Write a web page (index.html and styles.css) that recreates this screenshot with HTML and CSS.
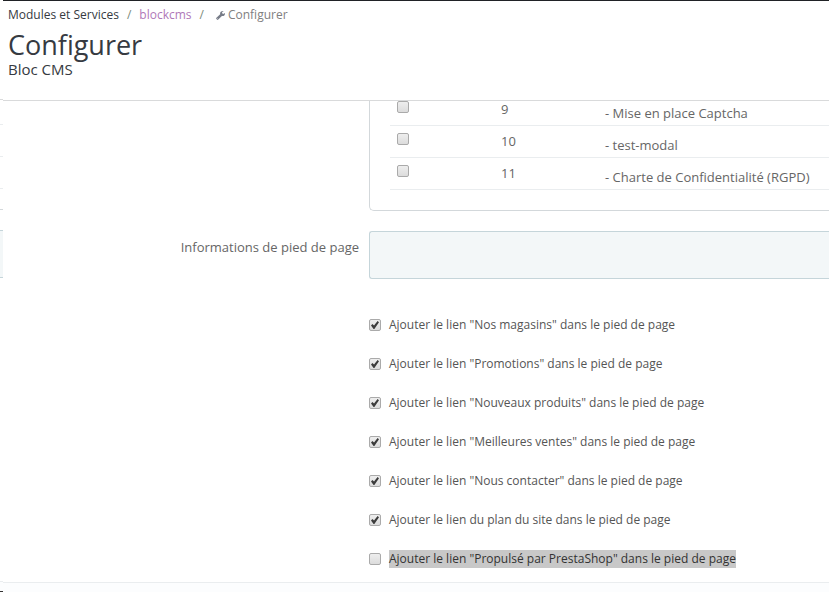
FILE: index.html
```html
<!DOCTYPE html>
<html lang="fr">
<head>
    <meta charset="UTF-8">
    <meta name="viewport" content="width=device-width, initial-scale=1.0">
    <title>Configurer - Bloc CMS</title>
    <link rel="stylesheet" href="styles.css">
</head>
<body>
    <!-- Left edge -->
    <div class="edge">
        <div class="edge-head"></div>
        <div class="edge-row"></div>
        <div class="edge-row"></div>
        <div class="edge-row"></div>
        <div class="edge-end"></div>
        <div class="edge-well"></div>
        <div class="edge-form"></div>
        <div class="edge-footer"></div>
    </div>

    <div class="page">
        <!-- Page header -->
        <header class="page-head">
            <nav class="breadcrumb">
                <span class="crumb crumb-main">Modules et Services</span>
                <span class="sep">/</span>
                <a class="crumb crumb-link" href="#">blockcms</a>
                <span class="sep">/</span>
                <span class="crumb crumb-current">
                    <svg class="icon-wrench" viewBox="0 0 16 16" aria-hidden="true">
                        <path fill-rule="evenodd" d="M15.6 3.6 12.9 5.2 10.9 4.100V1.900L13.600.400C11.200-.500 8.100.800 7.400 3.400c-.2.800-.2 1.500 0 2.200L.8 12.100c-.7.700-.7 1.600 0 2.300l.9.900c.7.700 1.600.7 2.300 0l6.500-6.600c2.700 1 5.300-1 5.400-3.400 0-.6-.1-1.200-.3-1.700zM2.600 12.700a.7.7 0 1 1 0 1.400.7.7 0 0 1 0-1.400z"/>
                    </svg>Configurer
                </span>
            </nav>
            <h1 class="title">Configurer</h1>
            <h2 class="subtitle">Bloc CMS</h2>
        </header>

        <form class="form">
            <!-- CMS pages -->
            <div class="panel">
                <table class="cms-table">
                    <tr>
                        <td class="col-check"><input type="checkbox" class="check" aria-label="Mise en place Captcha"></td>
                        <td class="col-id">9</td>
                        <td class="col-name">- Mise en place Captcha</td>
                    </tr>
                    <tr>
                        <td class="col-check"><input type="checkbox" class="check" aria-label="test-modal"></td>
                        <td class="col-id">10</td>
                        <td class="col-name">- test-modal</td>
                    </tr>
                    <tr>
                        <td class="col-check"><input type="checkbox" class="check" aria-label="Charte de Confidentialité (RGPD)"></td>
                        <td class="col-id">11</td>
                        <td class="col-name">- Charte de Confidentialité (RGPD)</td>
                    </tr>
                </table>
            </div>

            <!-- Footer information -->
            <div class="form-label">Informations de pied de page</div>
            <div class="well"></div>

            <div class="options">
                <label class="option"><input type="checkbox" class="check" checked><span>Ajouter le lien "Nos magasins" dans le pied de page</span></label>
                <label class="option"><input type="checkbox" class="check" checked><span>Ajouter le lien "Promotions" dans le pied de page</span></label>
                <label class="option"><input type="checkbox" class="check" checked><span>Ajouter le lien "Nouveaux produits" dans le pied de page</span></label>
                <label class="option"><input type="checkbox" class="check" checked><span>Ajouter le lien "Meilleures ventes" dans le pied de page</span></label>
                <label class="option"><input type="checkbox" class="check" checked><span>Ajouter le lien "Nous contacter" dans le pied de page</span></label>
                <label class="option"><input type="checkbox" class="check" checked><span>Ajouter le lien du plan du site dans le pied de page</span></label>
                <label class="option"><input type="checkbox" class="check"><span class="selected">Ajouter le lien "Propulsé par PrestaShop" dans le pied de page</span></label>
            </div>
        </form>

        <footer class="panel-footer"></footer>
    </div>
</body>
</html>
```

FILE: styles.css
```css
* {
    box-sizing: border-box;
}
body {
    display: flex;
    min-height: 100vh;
    margin: 0;
    background-color: #fff;
    font-family: "Open Sans", sans-serif;
    font-size: 13px;
    line-height: 18px;
    color: #666;
    font-variant-ligatures: none;
}

/* Left edge */
.edge {
    display: flex;
    flex-direction: column;
    width: 3px;
}
.edge-head {
    height: 100px;
    border-bottom: 1px solid #d9dadb;
}
.edge-row {
    height: 32px;
    border-bottom: 1px solid #eaedef;
}
.edge-row:nth-child(2) { height: 25px; }
.edge-end {
    height: 21px;
    border-bottom: 1px solid #d3d8db;
}
.edge-well {
    height: 48px;
    margin-top: 20px;
    border: solid #c5d5da;
    border-width: 1px 0;
    background-color: #f3f7f8;
}
.edge-form {
    height: 304px;
    border-bottom: 1px solid #eaedef;
}
.edge-footer {
    flex: 1;
    background-color: #fcfdfe;
    border-bottom: 1px solid #333;
}

.page {
    display: flex;
    flex-direction: column;
    flex: 1;
    min-width: 0;
}

/* Header */
.page-head {
    padding: 5px 5px 23px;
    border-top: 1px solid #202226;
    border-bottom: 1px solid #d9dadb;
}
.breadcrumb {
    display: flex;
    gap: 8px;
    font-size: 12px;
}
.crumb-main { color: #363a41; }
.crumb-link {
    color: #b078b8;
    text-decoration: none;
}
.crumb-current {
    display: flex;
    align-items: center;
    gap: 3px;
    margin-left: 4px;
    color: #808080;
}
.sep { color: #7a8a7a; }
.icon-wrench {
    width: 9px;
    height: 9px;
    fill: #777c88;
}
.title {
    margin: 4px 0 0;
    font-size: 27px;
    font-weight: 400;
    line-height: 33px;
    color: #363a41;
}
.subtitle {
    margin: 0;
    font-size: 15px;
    font-weight: 400;
    line-height: 16px;
    color: #363a41;
}

/* Form */
.form {
    display: grid;
    grid-template-columns: 356px 1fr;
    column-gap: 10px;
}
.panel {
    grid-column: 2;
    overflow: hidden;
    margin-bottom: 20px;
    padding: 0 0 20px 20px;
    border: 1px solid #d3d8db;
    border-width: 0 0 1px 1px;
    border-radius: 0 0 0 5px;
}
.cms-table {
    width: 100%;
    margin-top: -7px;
    border-collapse: separate;
    border-spacing: 0;
    table-layout: fixed;
}
.cms-table td {
    height: 32px;
    padding: 7px 7px 0;
    border-bottom: 1px solid #eaedef;
    vertical-align: top;
    white-space: nowrap;
}
.cms-table .col-check { width: 104px; }
.cms-table .col-id {
    width: 104px;
    padding-top: 6px;
}
.cms-table .col-name { padding-top: 10px; }
.form-label {
    padding-top: 7px;
    text-align: right;
}
.well {
    height: 48px;
    border: 1px solid #c5d5da;
    border-right: none;
    border-radius: 3px 0 0 3px;
    background-color: #f3f7f8;
}
.options {
    grid-column: 2;
    display: grid;
    gap: 21px;
    padding: 37px 0 14px;
}
.option {
    display: flex;
    align-items: center;
    gap: 8px;
    font-size: 12px;
    color: #555;
}
.selected {
    background-color: #c8c8c8;
    color: #333;
}

/* Checkboxes */
.check {
    appearance: none;
    display: block;
    flex: none;
    position: relative;
    width: 12px;
    height: 12px;
    margin: 0;
    border: 1px solid #aaa;
    border-radius: 2px;
    background: linear-gradient(#eee, #dcdcdc);
}
.check:checked::after {
    content: "";
    position: absolute;
    inset: 1px;
    background-color: #3c3c3c;
    clip-path: polygon(0 55%, 18% 38%, 38% 56%, 82% 0, 100% 16%, 42% 100%, 32% 100%);
}

.panel-footer {
    flex: 1;
    border-top: 1px solid #eaedef;
    background-color: #fcfdfe;
}
```
